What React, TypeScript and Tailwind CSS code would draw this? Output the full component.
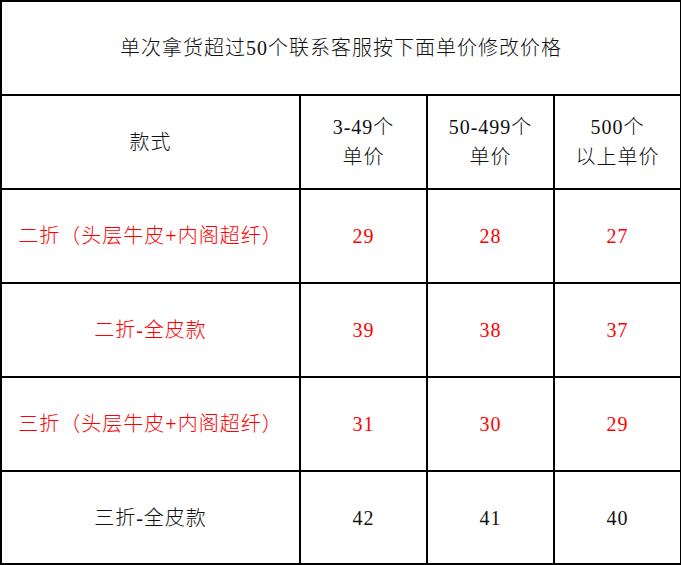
const rows = [
  { name: "二折（头层牛皮+内阁超纤）", prices: ["29", "28", "27"], red: true },
  { name: "二折-全皮款", prices: ["39", "38", "37"], red: true },
  { name: "三折（头层牛皮+内阁超纤）", prices: ["31", "30", "29"], red: true },
  { name: "三折-全皮款", prices: ["42", "41", "40"], red: false },
];

const cell = "border-2 border-black text-center align-middle";

export default function App() {
  return (
    <div
      className="w-[681px] h-[565px] bg-white text-[20px] leading-[30px] tracking-[1px] font-light text-[#111]"
      style={{ fontFamily: '"Liberation Serif", "Noto Sans CJK SC", serif' }}
    >
      <table className="border-collapse table-fixed w-[680px]">
        <colgroup>
          <col className="w-[299px]" />
          <col className="w-[127px]" />
          <col className="w-[127px]" />
          <col className="w-[127px]" />
        </colgroup>
        <tbody>
          <tr className="h-[94px]">
            <td colSpan={4} className={cell}>
              单次拿货超过50个联系客服按下面单价修改价格
            </td>
          </tr>
          <tr className="h-[94px]">
            <td className={cell}>款式</td>
            <td className={cell}>
              3-49个
              <br />
              单价
            </td>
            <td className={cell}>
              50-499个
              <br />
              单价
            </td>
            <td className={cell}>
              500个
              <br />
              以上单价
            </td>
          </tr>
          {rows.map((r, i) => (
            <tr key={i} className={i === rows.length - 1 ? "h-[93px]" : "h-[94px]"}>
              <td className={`${cell} ${r.red ? "text-[#ff0000]" : ""}`}>{r.name}</td>
              {r.prices.map((p, j) => (
                <td key={j} className={`${cell} ${r.red ? "text-[#ff0000]" : ""}`}>
                  {p}
                </td>
              ))}
            </tr>
          ))}
        </tbody>
      </table>
    </div>
  );
}
